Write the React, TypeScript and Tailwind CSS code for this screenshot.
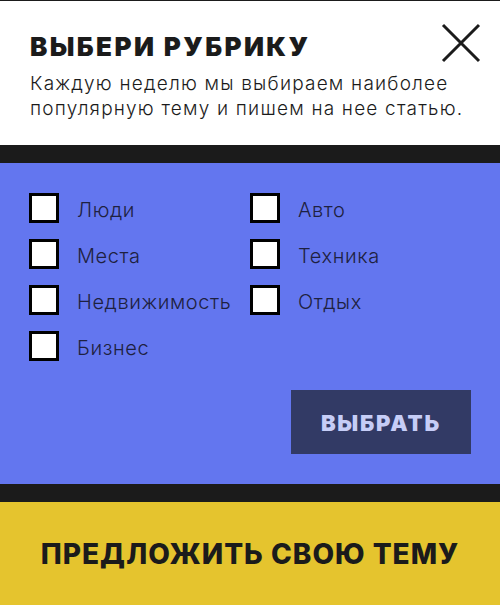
import React, { useState } from "react";

const topics = [
  ["Люди", "Авто"],
  ["Места", "Техника"],
  ["Недвижимость", "Отдых"],
  ["Бизнес"],
];

const Check = ({ label }: { label: string }) => {
  const [checked, setChecked] = useState(false);
  return (
    <label className="flex h-[30px] cursor-pointer items-center">
      <span
        className="flex h-[30px] w-[30px] shrink-0 items-center justify-center border-[3px] border-black bg-white"
        onClick={() => setChecked(!checked)}
      >
        {checked && <span className="h-3 w-3 bg-black" />}
      </span>
      <span className="ml-[18px] pt-[3px] text-[20px] font-light leading-none tracking-[0.6px] text-[#1e2140]">
        {label}
      </span>
    </label>
  );
};

export default function App() {
  return (
    <div
      className="flex h-[605px] w-[500px] flex-col border-t border-[#1b1b1b] bg-white"
      style={{ fontFamily: "Inter, 'Noto Sans', sans-serif" }}
    >
      <div className="relative h-[144px] px-[30px] pt-[31px]">
        <h1 className="text-[26px] font-black leading-[30px] tracking-[2.4px] text-[#1b1b1b]">
          ВЫБЕРИ РУБРИКУ
        </h1>
        <p className="mt-[9px] text-[19px] font-light leading-[25px] tracking-[1.2px] text-[#1b1b1b]">
          Каждую неделю мы выбираем наиболее
          <br />
          популярную тему и пишем на нее статью.
        </p>
        <svg
          className="absolute right-[19px] top-[22px]"
          width="40"
          height="40"
          viewBox="0 0 40 40"
        >
          <path d="M2 2 L38 38 M38 2 L2 38" stroke="#1b1b1b" strokeWidth="3" />
        </svg>
      </div>
      <div className="h-[18px] bg-[#1b1b1b]" />
      <div className="flex flex-col bg-[#6376ef] px-[29px] pb-[30px] pt-[30px]">
        <div className="grid grid-cols-[221px_1fr] gap-y-4">
          {topics.flat().map((t) => (
            <Check key={t} label={t} />
          ))}
        </div>
        <div className="mt-[29px] flex justify-end">
          <button className="h-16 w-[180px] pt-[2px] text-[22px] font-black tracking-[1.8px] text-[#c6cdf7] bg-[#323a65]">
            ВЫБРАТЬ
          </button>
        </div>
      </div>
      <div className="h-[18px] bg-[#1b1b1b]" />
      <div className="flex flex-1 items-center justify-center bg-[#e5c42e]">
        <span className="text-[28px] font-extrabold tracking-[1px] text-[#1b1b1b]">
          ПРЕДЛОЖИТЬ СВОЮ ТЕМУ
        </span>
      </div>
    </div>
  );
}
